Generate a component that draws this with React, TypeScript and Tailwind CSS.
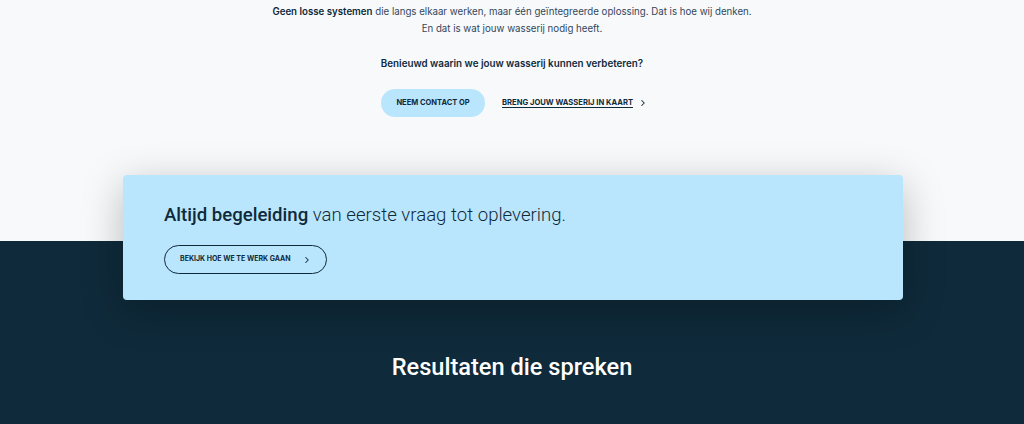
import { ChevronRight } from 'lucide-react'

export default function App() {
  return (
    <div className="w-[1024px] h-[424px] overflow-hidden bg-[#f8f9fb] font-['Inter',sans-serif] text-[#0f2a3a]">
      {/* Intro */}
      <div className="flex flex-col items-center pt-[3px] text-center">
        <p className="text-[9.7px] leading-[17px] text-[#33475b]">
          <strong className="font-semibold text-[#0f2a3a]">Geen losse systemen</strong> die langs elkaar werken, maar één geïntegreerde oplossing. Dat is hoe wij denken.
          <br />
          En dat is wat jouw wasserij nodig heeft.
        </p>
        <p className="mt-[18px] text-[9.8px] leading-[17px] font-semibold">Benieuwd waarin we jouw wasserij kunnen verbeteren?</p>
        <div className="mt-[17px] ml-[5px] flex items-center gap-[17px]">
          <button className="h-[28px] w-[104px] rounded-full bg-[#bae6fd] text-[7.5px] font-bold">NEEM CONTACT OP</button>
          <a className="flex items-center gap-[5px] text-[7.6px] font-bold underline underline-offset-2">
            BRENG JOUW WASSERIJ IN KAART
            <ChevronRight className="h-[10px] w-[10px]" strokeWidth={2.5} />
          </a>
        </div>
      </div>

      {/* Card straddling both sections */}
      <div className="mt-[58px] flex justify-center bg-[linear-gradient(to_bottom,#f8f9fb_66px,#0f2a3a_66px)]">
        <div className="ml-[2px] h-[125px] w-[780px] rounded-[4px] bg-[#bae6fd] px-[41px] pt-[27px] shadow-[0_10px_40px_rgba(0,0,0,0.25)]">
          <h2 className="font-['Roboto',sans-serif] text-[18.6px] leading-[26px] font-light text-[#0f2a3a]">
            <span className="font-medium">Altijd begeleiding</span> van eerste vraag tot oplevering.
          </h2>
          <button className="mt-[17px] flex h-[29px] items-center gap-[11px] rounded-full border border-[#0f2a3a] pl-[15px] pr-[14px] text-[7px] font-bold">
            BEKIJK HOE WE TE WERK GAAN
            <ChevronRight className="h-[10px] w-[10px]" strokeWidth={2.5} />
          </button>
        </div>
      </div>

      {/* Dark section */}
      <div className="flex h-[200px] justify-center bg-[#0f2a3a] pt-[52px]">
        <h2 className="font-['Roboto',sans-serif] text-[23.6px] leading-[30px] font-medium text-white">Resultaten die spreken</h2>
      </div>
    </div>
  )
}
